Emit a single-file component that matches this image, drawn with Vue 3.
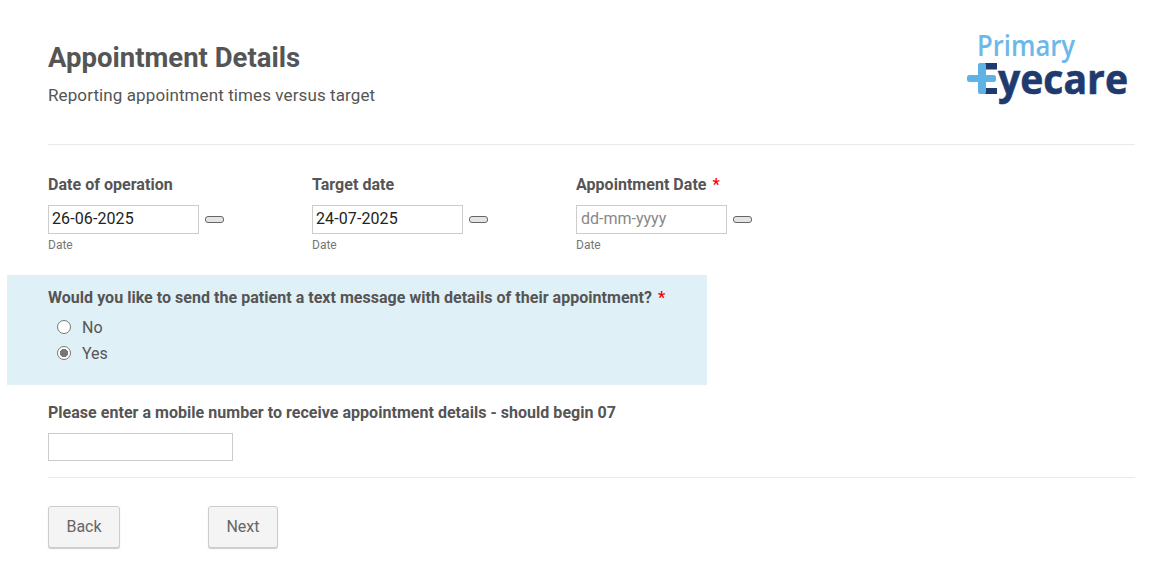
<script setup>
const dates = [
  { label: 'Date of operation', value: '26-06-2025', required: false },
  { label: 'Target date', value: '24-07-2025', required: false },
  { label: 'Appointment Date', value: '', required: true }
]
</script>

<template>
  <div class="page">
    <header class="head">
      <div>
        <h1>Appointment Details</h1>
        <p class="sub">Reporting appointment times versus target</p>
      </div>
      <svg class="logo" width="176" height="84" viewBox="0 0 176 84" role="img" aria-label="Primary Eyecare">
        <text x="18" y="29.500" class="logo-top" textLength="98" lengthAdjust="spacingAndGlyphs">Primary</text>
        <rect x="26" y="37" width="12" height="6.500" fill="#1f3a6e" />
        <rect x="26" y="62" width="12" height="6" fill="#1f3a6e" />
        <rect x="8" y="49" width="29" height="7" rx="2.500" fill="#5fb2e6" />
        <rect x="19" y="37" width="8" height="31" rx="2" fill="#5fb2e6" />
        <text x="39" y="68" class="logo-main" textLength="130" lengthAdjust="spacingAndGlyphs">yecare</text>
      </svg>
    </header>
    <hr class="rule first" />

    <section class="dates">
      <div v-for="d in dates" :key="d.label" class="date">
        <label class="label">{{ d.label }}<span v-if="d.required" class="req">*</span></label>
        <div class="date-row">
          <div class="date-input" :class="{ empty: !d.value }">{{ d.value || 'dd-mm-yyyy' }}</div>
          <span class="pill"></span>
        </div>
        <div class="hint">Date</div>
      </div>
    </section>

    <section class="question">
      <div class="label">Would you like to send the patient a text message with details of their appointment?<span class="req">*</span></div>
      <div class="radio-row"><span class="radio"></span>No</div>
      <div class="radio-row"><span class="radio on"></span>Yes</div>
    </section>

    <section class="mobile">
      <div class="label">Please enter a mobile number to receive appointment details - should begin 07</div>
      <div class="text-input"></div>
    </section>
    <hr class="rule" />

    <div class="actions">
      <button class="btn back">Back</button>
      <button class="btn next">Next</button>
    </div>
  </div>
</template>

<style>
html, body { margin: 0; background: #fff; }
</style>

<style scoped>
.page {
  box-sizing: border-box;
  width: 1154px;
  height: 569px;
  overflow: hidden;
  padding: 0 19px 0 48px;
  font-family: Roboto, "Liberation Sans", sans-serif;
  color: #555;
}
.head {
  display: flex;
  justify-content: space-between;
  height: 144px;
}
h1 {
  margin: 42px 0 0;
  font-size: 27.5px;
  line-height: 32px;
  font-weight: 700;
  color: #555;
}
.sub {
  margin: 10px 0 0;
  font-size: 17px;
  line-height: 22px;
  letter-spacing: 0.1px;
  color: #555;
}
.logo { margin-top: 26px; }
.logo-top {
  font-family: "Open Sans", sans-serif;
  font-size: 28px;
  font-weight: 600;
  fill: #6cb8ea;
}
.logo-main {
  font-family: "Open Sans", sans-serif;
  font-size: 41px;
  font-weight: 700;
  fill: #1f3a6e;
  stroke: #1f3a6e;
  stroke-width: 0.6px;
}
.rule {
  border: 0;
  border-top: 1px solid #e9e9e9;
  margin: 0;
}
.dates {
  display: flex;
  padding-top: 30px;
  height: 100px;
}
.date { width: 264px; }
.label {
  display: block;
  font-size: 16px;
  line-height: 20px;
  font-weight: 700;
  letter-spacing: 0.03px;
  color: #555;
}
.req {
  margin-left: 6px;
  color: #f00;
}
.date-row {
  display: flex;
  align-items: center;
  margin-top: 10px;
}
.date-input {
  box-sizing: border-box;
  width: 151px;
  height: 29px;
  border: 1px solid #ccc;
  padding-left: 3px;
  font-size: 16px;
  line-height: 26px;
  letter-spacing: 0.1px;
  color: #222;
}
.date-input.empty { padding-left: 4px; letter-spacing: 0; color: #888; }
.pill {
  box-sizing: border-box;
  width: 19px;
  height: 7px;
  margin-left: 6px;
  border: 1px solid #666;
  border-radius: 3px;
  background: #e4e4e4;
}
.hint {
  margin-top: 3px;
  font-size: 12px;
  line-height: 16px;
  color: #777;
}
.question {
  box-sizing: border-box;
  width: 700px;
  height: 110px;
  margin: 0 0 0 -41px;
  padding: 13px 0 0 41px;
  background: #dff0f7;
}
.radio-row {
  display: flex;
  align-items: center;
  height: 26px;
  padding-left: 9px;
  font-size: 16px;
  color: #555;
}
.question .label { margin-bottom: 6px; }
.radio {
  box-sizing: border-box;
  width: 14px;
  height: 14px;
  margin-right: 11px;
  border: 1px solid #767676;
  border-radius: 50%;
  background: #fff;
}
.radio.on {
  background: radial-gradient(circle, #777 0 3.8px, #fff 4.4px);
}
.mobile { padding-top: 18px; height: 92px; box-sizing: border-box; }
.text-input {
  box-sizing: border-box;
  width: 185px;
  height: 28px;
  margin-top: 10px;
  border: 1px solid #ccc;
  background: #fff;
}
.actions {
  display: flex;
  padding-top: 28px;
}
.btn {
  box-sizing: border-box;
  height: 42px;
  border: 1px solid #ccc;
  border-radius: 3px;
  background: #f4f4f4;
  box-shadow: 0 1px 1px rgba(0, 0, 0, 0.2);
  font-family: inherit;
  font-size: 16px;
  color: #666;
  padding: 0 0 2px;
}
.back { width: 72px; margin-right: 88px; }
.next { width: 70px; }
</style>
